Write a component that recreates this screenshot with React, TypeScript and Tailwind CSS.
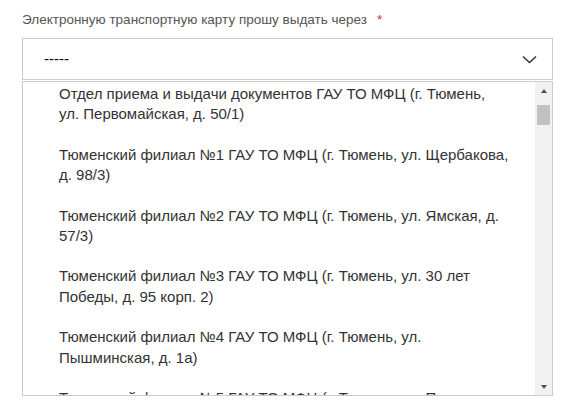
const options: string[][] = [
  ["Отдел приема и выдачи документов ГАУ ТО МФЦ (г. Тюмень,", "ул. Первомайская, д. 50/1)"],
  ["Тюменский филиал №1 ГАУ ТО МФЦ (г. Тюмень, ул. Щербакова,", "д. 98/3)"],
  ["Тюменский филиал №2 ГАУ ТО МФЦ (г. Тюмень, ул. Ямская, д.", "57/3)"],
  ["Тюменский филиал №3 ГАУ ТО МФЦ (г. Тюмень, ул. 30 лет", "Победы, д. 95 корп. 2)"],
  ["Тюменский филиал №4 ГАУ ТО МФЦ (г. Тюмень, ул.", "Пышминская, д. 1а)"],
  ["Тюменский филиал №5 ГАУ ТО МФЦ (г. Тюмень, ул. Пермякова,", "д. 1)"],
];

const Scrollbar = () => (
  <div className="flex w-[17px] shrink-0 flex-col bg-[#f1f1f1]">
    <div className="flex h-[17px] items-center justify-center">
      <div className="h-0 w-0 border-x-[3.5px] border-b-[4px] border-x-transparent border-b-[#505050]" />
    </div>
    <div className="mt-[6px] ml-[2px] h-[20px] w-[13px] bg-[#c1c1c1]" />
    <div className="flex-1" />
    <div className="flex h-[17px] items-center justify-center">
      <div className="h-0 w-0 border-x-[3.5px] border-t-[4px] border-x-transparent border-t-[#505050]" />
    </div>
  </div>
);

export default function App() {
  return (
    <div className="h-[415px] w-[573px] bg-white pl-[22px] pt-[11px] font-['Liberation_Sans',Arial,sans-serif]">
      <div className="flex h-[18px] items-center text-[13.5px] text-[#555]">
        Электронную транспортную карту прошу выдать через
        <span className="ml-[10px] text-[#e5262b]">*</span>
      </div>

      <div className="mt-[9px] flex h-[42px] w-[531px] items-center justify-between border border-[#ccc] pl-[21px] pr-[15px]">
        <span className="text-[15px] text-black">-----</span>
        <svg width="15" height="9" viewBox="0 0 15 9" fill="none">
          <path d="M1 1.5 L7.5 7.5 L14 1.5" stroke="#333" strokeWidth="1.5" />
        </svg>
      </div>

      <div className="mt-[1px] flex h-[315px] w-[531px] border border-[#ccc]">
        <div className="flex-1 overflow-hidden">
          <ul className="-mt-[8px]">
            {options.map((lines, i) => (
              <li key={i} className="py-[10px] pl-[36px] text-[15px] leading-[20.4px] text-[#333]">
                {lines.map((l, j) => (
                  <div key={j} className="whitespace-nowrap">
                    {l}
                  </div>
                ))}
              </li>
            ))}
          </ul>
        </div>
        <Scrollbar />
      </div>
    </div>
  );
}
